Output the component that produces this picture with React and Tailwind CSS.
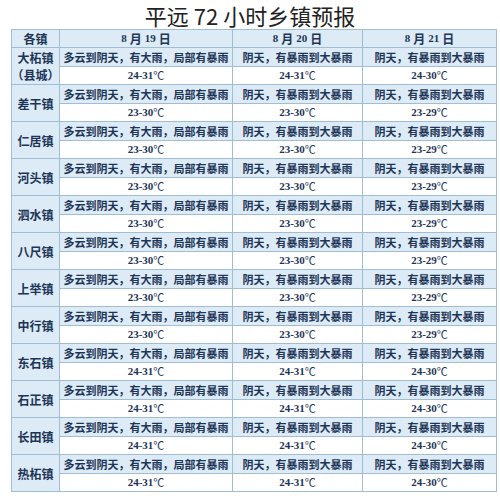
import React from "react";

const W1 = "多云到阴天，有大雨，局部有暴雨";
const W2 = "阴天，有暴雨到大暴雨";

const rows = [
  { name: ["大柘镇", "（县城）"], t: ["24-31", "24-31", "24-30"] },
  { name: ["差干镇"], t: ["23-30", "23-30", "23-29"] },
  { name: ["仁居镇"], t: ["23-30", "23-30", "23-29"] },
  { name: ["河头镇"], t: ["23-30", "23-30", "23-29"] },
  { name: ["泗水镇"], t: ["23-30", "23-30", "23-29"] },
  { name: ["八尺镇"], t: ["23-30", "23-30", "23-29"] },
  { name: ["上举镇"], t: ["23-30", "23-30", "23-29"] },
  { name: ["中行镇"], t: ["23-30", "23-30", "23-29"] },
  { name: ["东石镇"], t: ["24-31", "24-31", "24-30"] },
  { name: ["石正镇"], t: ["24-31", "24-31", "24-30"] },
  { name: ["长田镇"], t: ["24-31", "24-31", "24-30"] },
  { name: ["热柘镇"], t: ["24-31", "24-31", "24-30"] },
];

const cjk = { fontFamily: '"Noto Sans CJK SC", sans-serif' };
const num = { fontFamily: '"Liberation Serif", "Noto Sans CJK SC", serif' };

function Temp({ v }) {
  return (
    <div className="h-[17px] flex items-center justify-center font-bold leading-none">
      <span style={num} className="text-[11px]">{v}</span>
      <span style={cjk} className="text-[11px] font-normal">℃</span>
    </div>
  );
}

function DateHead({ d }) {
  return (
    <div className="h-[17px] flex items-center justify-center font-bold leading-none gap-[3px]">
      <span style={num} className="text-[11px]">8</span>
      <span style={cjk} className="text-[12px]">月</span>
      <span style={num} className="text-[11px]">{d}</span>
      <span style={cjk} className="text-[12px]">日</span>
    </div>
  );
}

function Weather({ text }) {
  return (
    <div className="h-[18px] flex items-center justify-center text-[11px] font-bold leading-none whitespace-nowrap">
      {text}
    </div>
  );
}

export default function App() {
  const bd = "border border-[#9fbdd3] p-0 align-middle";
  return (
    <div className="w-[500px] h-[501px] bg-white overflow-hidden" style={cjk}>
      <div className="h-[29px] flex items-center justify-center text-[22px] text-[#222] leading-[26px]">
        平远 72 小时乡镇预报
      </div>
      <table className="ml-[11px] w-[485px] table-fixed border-collapse text-[#1d3557]">
        <colgroup>
          <col className="w-[48px]" />
          <col className="w-[173px]" />
          <col className="w-[130px]" />
          <col className="w-[134px]" />
        </colgroup>
        <tbody>
          <tr className="bg-[#dcebf5]">
            <td className={bd}>
              <div className="h-[17px] flex items-center justify-center text-[12px] font-bold leading-none">各镇</div>
            </td>
            <td className={bd}><DateHead d="19" /></td>
            <td className={bd}><DateHead d="20" /></td>
            <td className={bd}><DateHead d="21" /></td>
          </tr>
          {rows.map((r, i) => (
            <React.Fragment key={i}>
              <tr className="bg-[#dcebf5]">
                <td rowSpan={2} className={`${bd} bg-[#dcebf5]`}>
                  <div className="flex flex-col items-center justify-center text-[12px] font-bold leading-[17px] whitespace-nowrap">
                    {r.name.map((n, j) => (
                      <div key={j}>{n}</div>
                    ))}
                  </div>
                </td>
                <td className={bd}><Weather text={W1} /></td>
                <td className={bd}><Weather text={W2} /></td>
                <td className={bd}><Weather text={W2} /></td>
              </tr>
              <tr className="bg-white">
                {r.t.map((t, k) => (
                  <td key={k} className={bd}><Temp v={t} /></td>
                ))}
              </tr>
            </React.Fragment>
          ))}
        </tbody>
      </table>
    </div>
  );
}
